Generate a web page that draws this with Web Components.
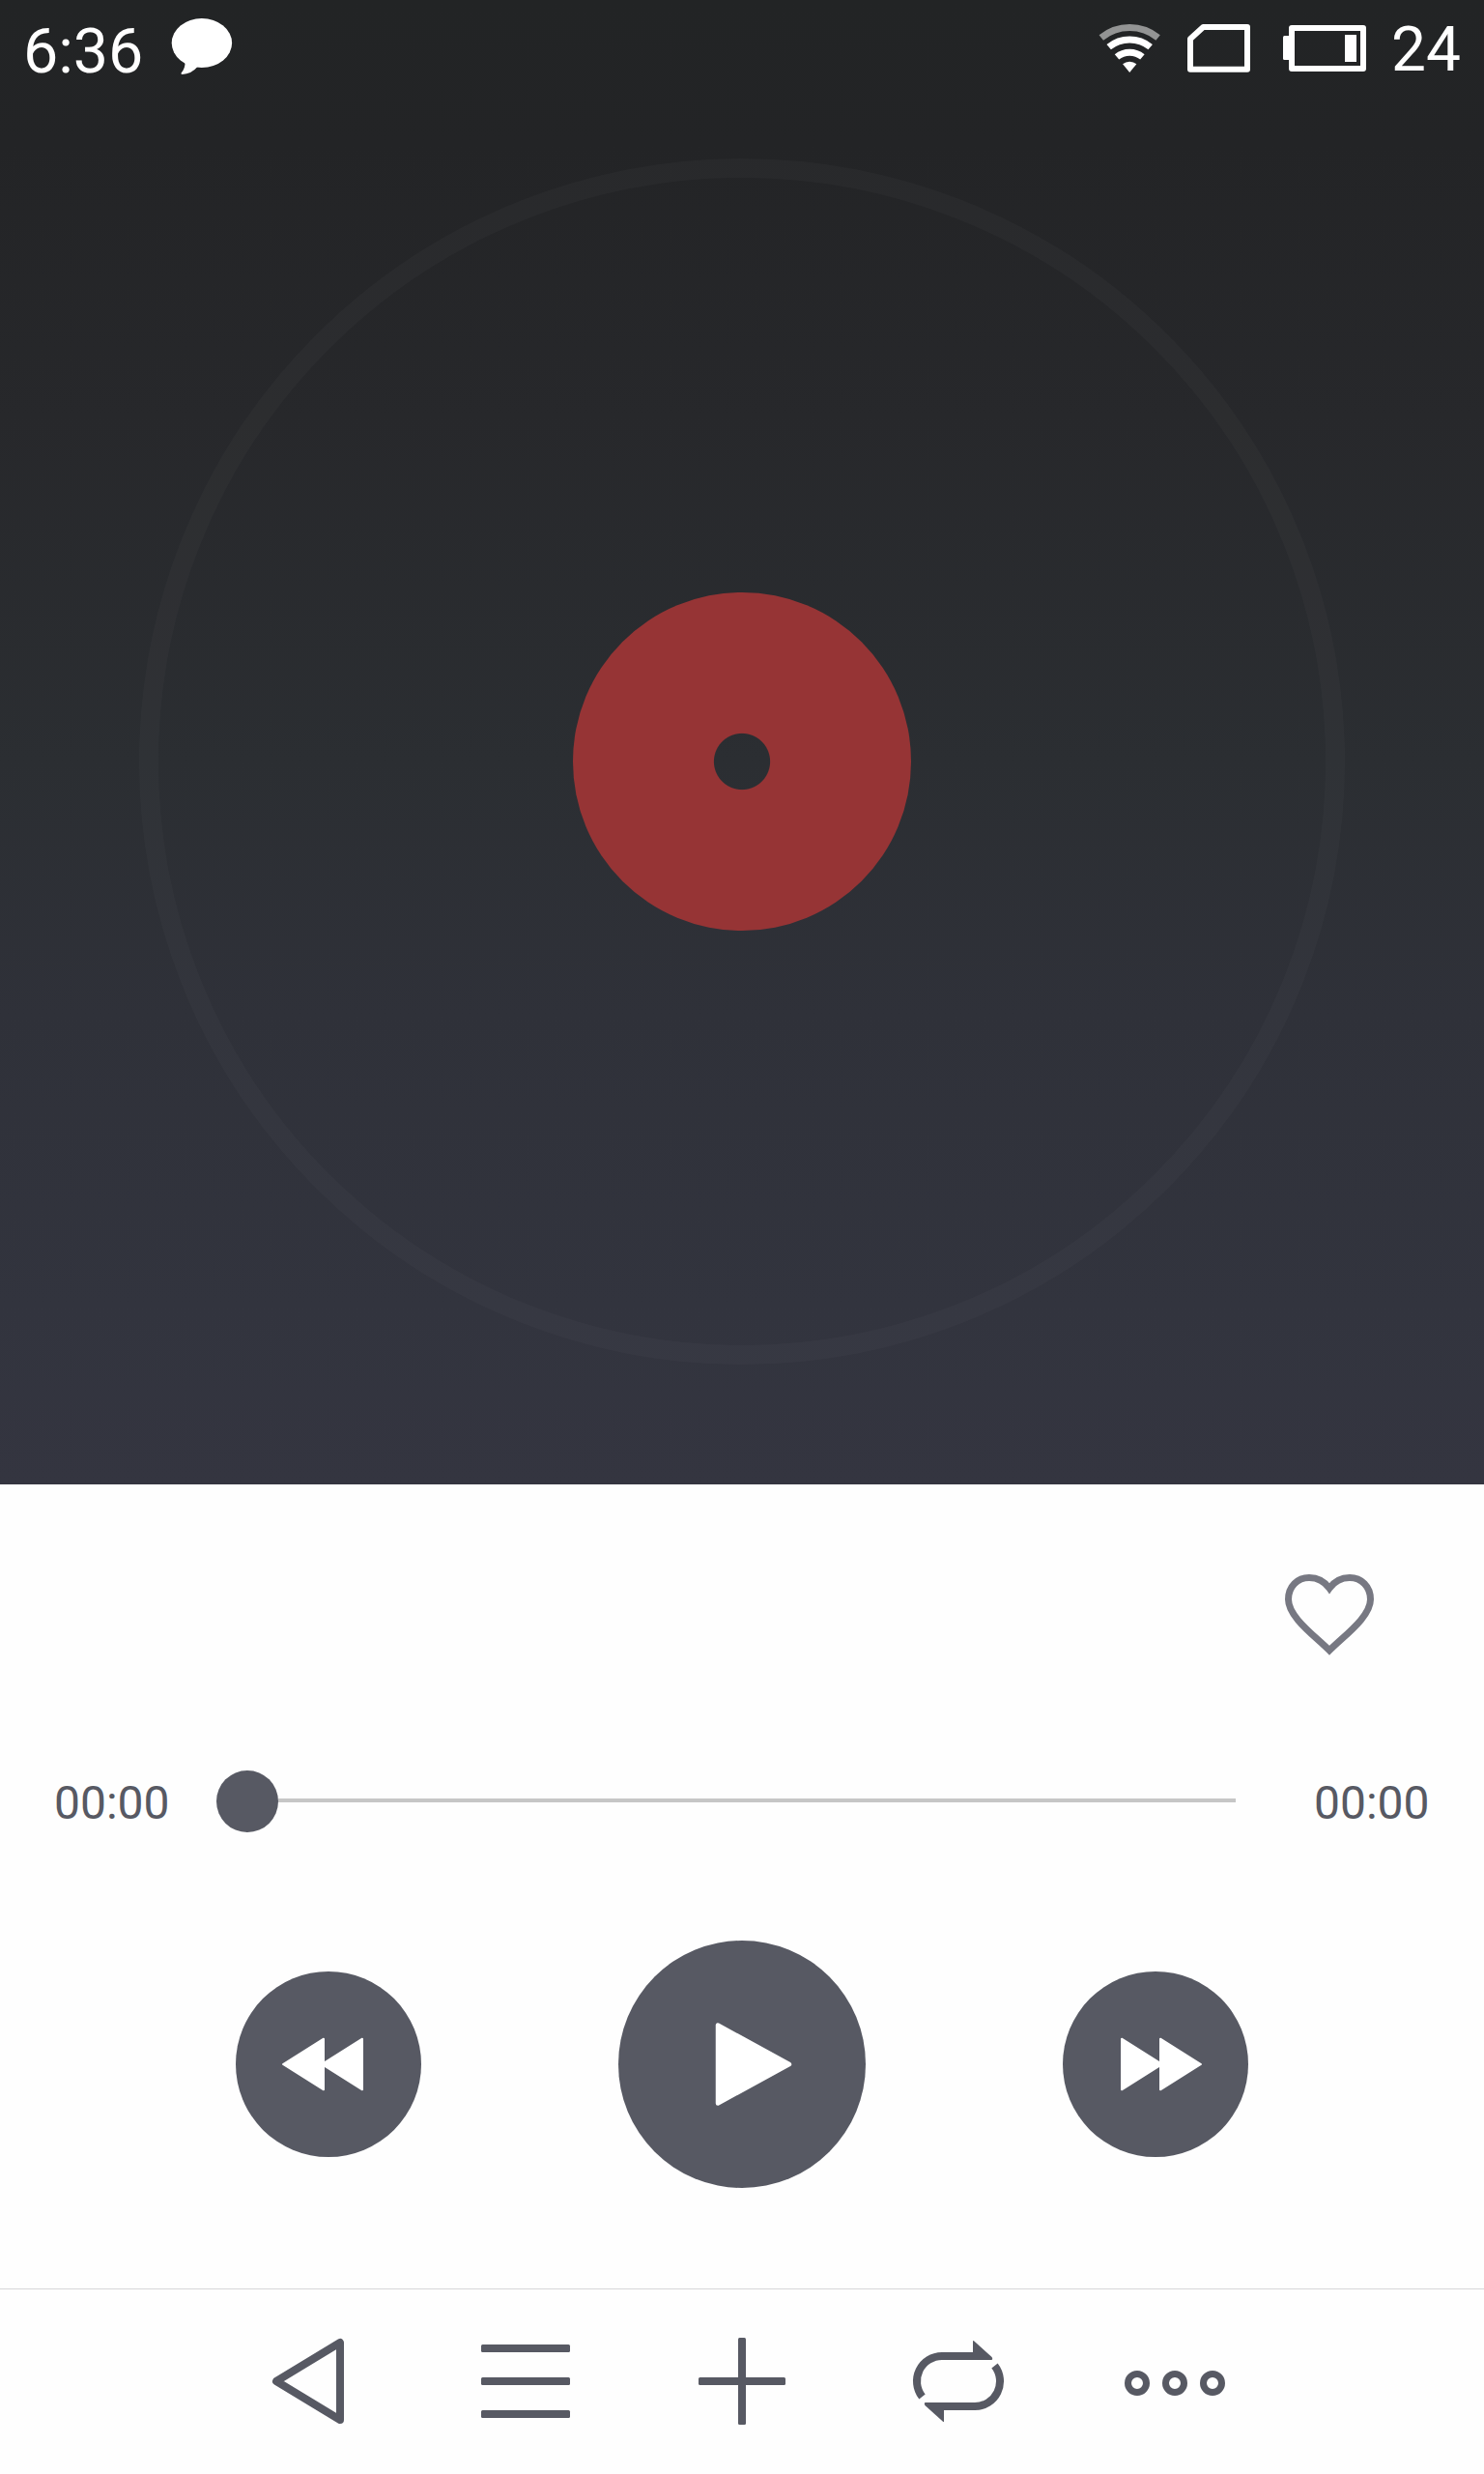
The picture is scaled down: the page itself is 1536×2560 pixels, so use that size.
<!DOCTYPE html>
<html lang="en">
<head>
<meta charset="utf-8">
<title>Music player</title>
<style>
  html, body { margin: 0; background: #fefefe; }
  body { font-family: Roboto, "Noto Sans", sans-serif; }
</style>
</head>
<body>
<music-player></music-player>
<script>
const define = (name, html) => {
  const template = document.createElement('template');
  template.innerHTML = html;
  customElements.define(name, class extends HTMLElement {
    constructor() {
      super();
      this.attachShadow({ mode: 'open' }).append(template.content.cloneNode(true));
    }
  });
};

// Shapes are drawn around a 0,0 centre.
const ARROW = '<path d="M-37.5 16A26 26 0 0 1-17-26H16" fill="none" stroke="currentColor" stroke-width="8"/><path d="M15-41.5Q15-42.5 16-41.7L34.6-25Q36-22 34-22H15Z"/>';
const SKIP = '<g stroke="currentColor" stroke-width="2" stroke-linejoin="round"><path d="M-47 0L-5-26.3V26.3Z"/><path d="M-7 0L35-26.3V26.3Z"/></g>';
const ICONS = {
  back: '<path d="M32-40V40L-34 0Z" fill="none" stroke="currentColor" stroke-width="8" stroke-linejoin="round"/>',
  menu: '<rect x="-46" y="-38" width="92" height="8" rx="1.5"/><rect x="-46" y="-4" width="92" height="8" rx="1.5"/><rect x="-46" y="30" width="92" height="8" rx="1.5"/>',
  add: '<rect x="-45" y="-4" width="90" height="8" rx="1.5"/><rect x="-4" y="-45" width="8" height="90" rx="1.5"/>',
  repeat: `${ARROW}<g transform="rotate(180)">${ARROW}</g>`,
  more: '<g fill="none" stroke="currentColor" stroke-width="7"><circle cx="-39" cy="2" r="9.5"/><circle cy="2" r="9.5"/><circle cx="39" cy="2" r="9.5"/></g>',
  rewind: SKIP,
  forward: `<g transform="scale(-1 1)">${SKIP}</g>`,
  play: '<path d="M-25-40.5V40.5L49 0Z" stroke="currentColor" stroke-width="4.5" stroke-linejoin="round"/>',
  heart: '<path d="M0 36.8C-16 21-42.5 2-42.5-16C-42.5-29.5-33-38.5-21-38.5C-12-38.5-5-34.5 0-27.5C5-34.5 12-38.5 21-38.5C33-38.5 42.5-29.5 42.5-16C42.5 2 16 21 0 36.8Z" fill="none" stroke="currentColor" stroke-width="7"/>'
};

customElements.define('player-icon', class extends HTMLElement {
  constructor() {
    super();
    this.attachShadow({ mode: 'open' });
  }
  connectedCallback() {
    this.shadowRoot.innerHTML = `
      <style>
        :host { display: block; width: 112px; height: 112px; flex: none; }
        svg { display: block; }
      </style>
      <svg width="112" height="112" viewBox="-56 -56 112 112" fill="currentColor">${ICONS[this.getAttribute('name')]}</svg>`;
  }
});

define('status-bar', `
  <style>
    :host { display: flex; box-sizing: border-box; height: 100px; padding: 0 24px; align-items: center; color: #fff; font-size: 64px; line-height: 76px; }
    svg { display: block; flex: none; }
    .clock { width: 124px; margin-top: 6px; font-size: 64.5px; }
    .bubble { margin-left: 28px; }
    .wifi { margin-left: auto; }
    .sim { margin-left: 26px; }
    .battery { margin-left: 32px; }
    .level { margin: 4px 0 0 26px; }
  </style>
  <span class="clock">6:36</span>
  <svg class="bubble" width="66" height="100" viewBox="176 0 66 100" fill="#fff">
    <ellipse cx="208.9" cy="44.5" rx="31.2" ry="25.5"/>
    <path d="M191.5 63Q192 70.5 187.6 75.5Q187 76.8 188.5 76.9Q198 76.8 204.5 69Z"/>
  </svg>
  <svg class="wifi" width="66" height="100" viewBox="1136 0 66 100">
    <g transform="translate(1169.2 75)" fill="none" stroke="#fff" stroke-width="7">
      <path d="M-29.4-36A46.5 46.5 0 0 1 29.4-36" stroke="#939494"/>
      <path d="M-21.5-26.35A34 34 0 0 1 21.5-26.35"/>
      <path d="M-13.2-16.1A20.8 20.8 0 0 1 13.2-16.1"/>
      <path d="M0 0L-7.15-8.7A11.3 11.3 0 0 1 7.15-8.7Z" fill="#fff" stroke="none"/>
    </g>
  </svg>
  <svg class="sim" width="68" height="100" viewBox="1228 0 68 100">
    <path d="M1245.4 28H1291V71.7H1232V40.3Z" fill="none" stroke="#fff" stroke-width="6" stroke-linejoin="round"/>
  </svg>
  <svg class="battery" width="86" height="100" viewBox="1328 0 86 100" fill="#fff">
    <rect x="1328" y="37" width="8" height="25" rx="1.5"/>
    <rect x="1337" y="29" width="74" height="42" fill="none" stroke="#fff" stroke-width="6" stroke-linejoin="round"/>
    <rect x="1392" y="36" width="12" height="28"/>
  </svg>
  <span class="level">24</span>
`);

define('vinyl-disc', `
  <style>
    :host { display: grid; place-items: center; box-sizing: border-box; width: 1248px; height: 1248px; border: 20px solid rgba(255, 255, 255, .022); border-radius: 50%; }
    .label { width: 350px; height: 350px; border-radius: 50%; background: radial-gradient(circle, transparent 28.6px, #963435 29.6px); }
  </style>
  <div class="label"></div>
`);

define('album-stage', `
  <style>
    :host { display: flex; flex-direction: column; align-items: center; height: 1536px; background: linear-gradient(#222425 0, #232426 150px, #27282b 430px, #2b2e32 788px, #2f3139 1050px, #32343e 1350px, #343540 1536px); }
    status-bar { align-self: stretch; }
    vinyl-disc { margin-top: 64px; }
  </style>
  <status-bar></status-bar>
  <vinyl-disc></vinyl-disc>
`);

define('seek-bar', `
  <style>
    :host { display: flex; box-sizing: border-box; align-items: center; height: 116px; padding: 0 56px; color: #575963; font-size: 48px; line-height: 56px; }
    .time { width: 120px; flex: none; margin-top: 3px; }
    .track { flex: 1; display: flex; align-items: center; margin: 0 81px 0 48px; }
    .knob { width: 64px; height: 64px; border-radius: 50%; background: #575963; }
    .rail { flex: 1; height: 4px; margin-top: -2px; background: #c6c6c6; }
  </style>
  <div class="time"><slot name="elapsed"></slot></div>
  <div class="track"><div class="knob"></div><div class="rail"></div></div>
  <div class="time"><slot name="total"></slot></div>
`);

define('round-button', `
  <style>
    :host { display: grid; place-items: center; width: var(--size, 192px); height: var(--size, 192px); border-radius: 50%; background: #575963; color: #fff; }
  </style>
  <slot></slot>
`);

define('nav-bar', `
  <style>
    :host { display: flex; justify-content: center; align-items: center; gap: 112px; height: 192px; color: #575963; box-shadow: inset 0 1px #d6d6d8; }
  </style>
  <slot></slot>
`);

define('music-player', `
  <style>
    :host { display: flex; flex-direction: column; width: 1536px; height: 2560px; background: #fefefe; overflow: hidden; }
    .favorite { display: flex; justify-content: flex-end; align-items: center; height: 270px; padding-right: 104px; color: #777882; }
    .controls { display: flex; justify-content: center; align-items: center; gap: 204px; height: 428px; margin-bottom: 18px; }
    .main { --size: 256px; }
  </style>
  <album-stage></album-stage>
  <div class="favorite"><player-icon name="heart"></player-icon></div>
  <seek-bar><span slot="elapsed">00:00</span><span slot="total">00:00</span></seek-bar>
  <div class="controls">
    <round-button><player-icon name="rewind"></player-icon></round-button>
    <round-button class="main"><player-icon name="play"></player-icon></round-button>
    <round-button><player-icon name="forward"></player-icon></round-button>
  </div>
  <nav-bar>
    <player-icon name="back"></player-icon>
    <player-icon name="menu"></player-icon>
    <player-icon name="add"></player-icon>
    <player-icon name="repeat"></player-icon>
    <player-icon name="more"></player-icon>
  </nav-bar>
`);
</script>
</body>
</html>
